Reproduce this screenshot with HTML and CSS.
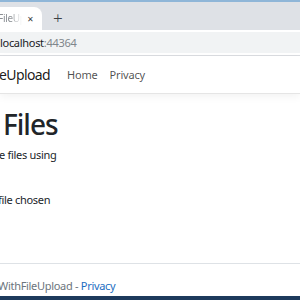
FILE: index.html
```html
<!DOCTYPE html>
<html lang="en">
<head>
    <meta charset="UTF-8">
    <title>Upload Files - UploadWithFileUpload</title>
    <link rel="stylesheet" href="styles.css">
</head>
<body>
    <div class="browser">
        <div class="tabstrip">
            <div class="tab">
                <span class="tab-title">FileUp</span>
                <span class="tab-close">&#x2715;</span>
            </div>
            <span class="new-tab">+</span>
        </div>
        <div class="toolbar">
            <div class="omnibox"><span class="host">localhost</span><span class="port">:44364</span></div>
        </div>
    </div>

    <header class="navbar">
        <span class="brand">eUpload</span>
        <nav class="nav-links">
            <a href="#">Home</a>
            <a href="#">Privacy</a>
        </nav>
    </header>

    <main class="content">
        <h1>Files</h1>
        <p>e files using</p>
        <div class="file-row">file chosen</div>
    </main>

    <footer class="footer">
        WithFileUpload - <a href="#">Privacy</a>
    </footer>

    <div class="taskbar"></div>
</body>
</html>
```

FILE: styles.css
```css
* {
    margin: 0;
    padding: 0;
    box-sizing: border-box;
}

html, body {
    width: 300px;
    height: 300px;
    overflow: hidden;
}

body {
    font-family: 'Noto Sans', 'Open Sans', sans-serif;
    background: white;
    color: #212529;
    display: flex;
    flex-direction: column;
}

.browser {
    border-top: 2px solid #8fb6d8;
    border-bottom: 1px solid #dadce0;
}

.tabstrip {
    height: 28px;
    background: #dee1e6;
    display: flex;
    align-items: flex-end;
}

.tab {
    width: 42px;
    height: 23px;
    background: white;
    border-top-right-radius: 8px;
    display: flex;
    align-items: center;
    padding-bottom: 1px;
    padding-right: 8px;
    overflow: hidden;
}

.tab-title {
    font-size: 10px;
    color: #8a8e93;
    margin-left: -2px;
    letter-spacing: -0.3px;
    width: 24px;
    overflow: hidden;
    white-space: nowrap;
    -webkit-mask-image: linear-gradient(to right, black 50%, transparent 100%);
    mask-image: linear-gradient(to right, black 50%, transparent 100%);
}

.tab-close {
    font-size: 8px;
    color: #3c4043;
    margin-left: auto;
}

.new-tab {
    font-size: 17px;
    font-weight: 300;
    color: #3c4043;
    margin-left: 11px;
    align-self: center;
    line-height: 1;
    margin-top: 3px;
}

.toolbar {
    height: 25px;
    background: white;
    padding: 2px 0;
}

.omnibox {
    height: 21px;
    background: #f1f3f4;
    font-size: 11px;
    letter-spacing: -0.3px;
    line-height: 21px;
    margin-left: -6px;
    padding-left: 6px;
}

.host {
    color: #202124;
}

.port {
    color: #80868b;
}

.navbar {
    height: 38px;
    border-bottom: 1px solid #e5e5e5;
    box-shadow: 0 3px 8px rgba(0, 0, 0, 0.05);
    display: flex;
    align-items: center;
}

.brand {
    font-size: 14px;
    letter-spacing: -0.6px;
    color: rgba(0, 0, 0, 0.9);
    margin-left: -1px;
}

.nav-links {
    display: flex;
    gap: 12px;
    margin-left: 17px;
}

.nav-links a {
    font-size: 11px;
    letter-spacing: -0.2px;
    color: rgba(0, 0, 0, 0.7);
    text-decoration: none;
}

.content {
    flex: 1;
    padding-top: 14px;
}

.content h1 {
    font-size: 28px;
    font-weight: 500;
    letter-spacing: -1px;
    line-height: 1.2;
    margin-left: 3px;
}

.content p {
    font-size: 11px;
    letter-spacing: -0.3px;
    margin-top: 5px;
    margin-left: -1px;
}

.file-row {
    font-size: 11px;
    letter-spacing: -0.3px;
    margin-top: 30px;
    margin-left: -2px;
}

.footer {
    border-top: 1px solid #dee2e6;
    height: 33px;
    font-size: 11px;
    letter-spacing: -0.3px;
    color: #6c757d;
    padding-top: 14px;
    margin-left: -2px;
}

.footer a {
    color: #1b6ec2;
    text-decoration: none;
}

.taskbar {
    height: 4px;
    background: #1d3a5c;
}
```
